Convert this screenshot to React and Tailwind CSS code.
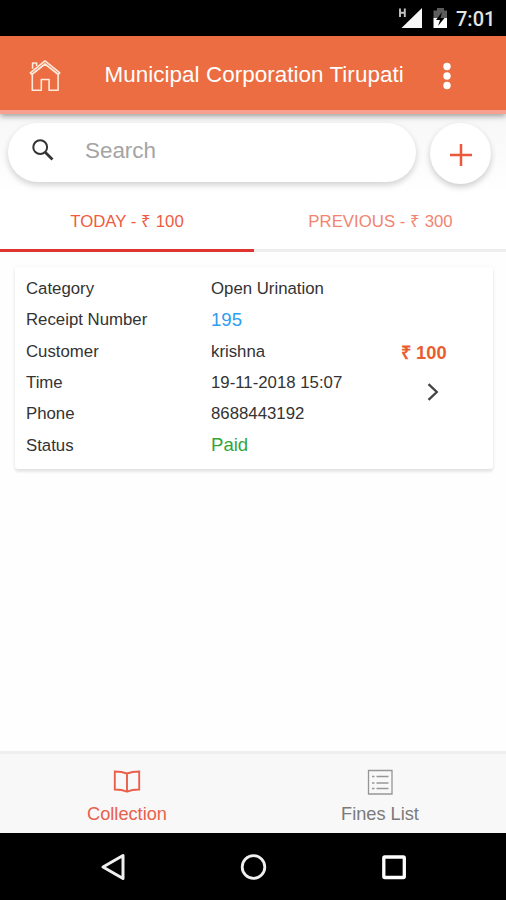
import React from 'react';

const details = [
  { label: 'Category', value: 'Open Urination', style: 'text-[#333333]' },
  { label: 'Receipt Number', value: '195', style: 'text-[18.6px] text-[#2f9df0]' },
  { label: 'Customer', value: 'krishna', style: 'text-[#333333]' },
  { label: 'Time', value: '19-11-2018 15:07', style: 'text-[#333333]' },
  { label: 'Phone', value: '8688443192', style: 'text-[#333333]' },
  { label: 'Status', value: 'Paid', style: 'text-[18.6px] text-[#33a63a]' },
];

function StatusBar() {
  return (
    <div className="flex h-9 shrink-0 items-center bg-black pl-[398px] text-[#e4e4e4]">
      <svg className="h-9 w-[56px] shrink-0" viewBox="0 0 56 36" fill="none">
        <path d="M2 8.500v8.500M6.800 8.500v8.500M2 12.700h4.800" stroke="#c4c4c4" strokeWidth="1.900" />
        <path d="M24 8v20H3.500z" fill="#f7f7f7" />
        <path d="M35.500 10.500h3.500V8h7v2.500h3V18H35.500z" fill="#5c5c5c" />
        <path d="M35.500 18H49v10H35.500z" fill="#fff" />
        <path d="M44 12l-6 8h4l-2 6 6.500-8h-4z" fill="#000" />
      </svg>
      <span className="ml-[2px] mt-[2px] font-[Roboto,sans-serif] text-[20px] font-medium leading-9">7:01</span>
    </div>
  );
}

function Header() {
  return (
    <header className="relative z-10 flex h-[78px] shrink-0 items-center border-b-[4px] border-[#f8a08f] bg-[#ec6d41] text-white shadow-[0_2px_6px_rgba(0,0,0,0.38)]">
      <svg className="ml-[29px] mt-[5px] h-[34px] w-[33px] shrink-0" viewBox="0 0 33 34" fill="none" stroke="#ffeadd" strokeWidth="1.6" strokeLinejoin="round">
        <path d="M1.300 13.800L16 1.800l14.800 12-1.500 1.700L16 5 2.800 15.500z" />
        <path d="M3.600 9.800V4h4v3M3.300 15.500v15.800h9V20.500h7.800v10.800h9V15.500" />
      </svg>
      <h1 className="ml-[42.500px] mt-[3px] w-[300px] whitespace-nowrap text-[22.400px] leading-8 tracking-[0.060px]">Municipal Corporation Tirupati</h1>
      <svg className="ml-[38px] mt-[5px] h-8 w-2 shrink-0" viewBox="0 0 8 32" fill="#fff">
        <circle cx="4" cy="6.500" r="3.700" />
        <circle cx="4" cy="16" r="3.700" />
        <circle cx="4" cy="25.500" r="3.700" />
      </svg>
    </header>
  );
}

function SearchRow() {
  return (
    <div className="flex h-[81px] shrink-0 items-start bg-gradient-to-b from-[#f7f7f7] to-white pl-2 pt-[9px]">
      <div className="flex h-[59px] w-[408px] items-center rounded-full bg-white pl-6 shadow-[0_3px_6px_rgba(0,0,0,0.18)]">
        <svg className="mb-[5px] h-[22px] w-[22px]" viewBox="0 0 22 22" fill="none" stroke="#333">
          <circle cx="8.200" cy="8.200" r="6.900" strokeWidth="2" />
          <path d="M13.200 13.200l7.300 7.300" strokeWidth="2.700" />
        </svg>
        <span className="mb-[3px] ml-[31px] text-[22.400px] leading-7 text-[#a4a4a4]">Search</span>
      </div>
      <div className="ml-[14px] flex h-[61px] w-[61px] items-center justify-center rounded-full bg-white shadow-[0_3px_6px_rgba(0,0,0,0.2)]">
        <svg className="mt-[2px] h-[22px] w-[22px]" viewBox="0 0 22 22" stroke="#e95a3c" strokeWidth="2.500">
          <path d="M11 0v22M0 11h22" />
        </svg>
      </div>
    </div>
  );
}

function Tabs() {
  return (
    <div className="flex h-[57px] shrink-0 text-[16.800px]">
      <div className="flex h-full w-[254px] items-center justify-center border-b-[3px] border-[#df3430] pb-[1px] text-[#ef5b40]">
        TODAY - ₹ 100
      </div>
      <div className="flex h-full flex-1 items-center justify-center border-b-[3px] border-[#eeeeee] pb-[1px] pl-[1px] text-[#f28470]">
        PREVIOUS - ₹ 300
      </div>
    </div>
  );
}

function ReceiptCard() {
  return (
    <div className="ml-[15px] mt-[15px] flex h-[202px] w-[478px] shrink-0 rounded-[3px] bg-white pl-[11px] pt-[6px] shadow-[0_3px_3px_rgba(0,0,0,0.09),0_0_4px_rgba(0,0,0,0.05)]">
      <div className="flex w-[364px] flex-col text-[16.800px] text-[#333333]">
        {details.map((d) => (
          <div key={d.label} className="flex h-[31.300px] items-center whitespace-nowrap">
            <span className="w-[185px]">{d.label}</span>
            <span className={d.style}>{d.value}</span>
          </div>
        ))}
      </div>
      <div className="ml-[11px] flex flex-col pt-[68px]">
        <span className="text-[18.300px] font-bold leading-6 text-[#e95e2e]">₹ 100</span>
        <svg className="ml-[26px] mt-[18px] h-[18px] w-3" viewBox="0 0 12 18" fill="none" stroke="#444" strokeWidth="2.300">
          <path d="M1.500 1.200L9.800 9l-8.300 7.800" />
        </svg>
      </div>
    </div>
  );
}

function BottomTabs() {
  return (
    <nav className="flex h-[82px] shrink-0 border-t-[3px] border-[#efefef] bg-[#f8f8f8] text-[18.200px]">
      <div className="flex w-[254px] flex-col items-center pt-[14px] text-[#e9604b]">
        <svg className="h-7 w-7" viewBox="0 0 28 28" fill="none" stroke="currentColor" strokeWidth="1.900">
          <path d="M1.800 3.500Q9 3.500 14 5.500Q19 3.500 26.200 3.500V21.500Q19 21.500 14 23.700Q9 21.500 1.800 21.500zM14 5.500v18" />
        </svg>
        <span className="mt-[6px] leading-6">Collection</span>
      </div>
      <div className="flex flex-1 flex-col items-center pt-[14px] text-[#7b7b7b]">
        <svg className="h-7 w-7" viewBox="0 0 28 28" fill="none" stroke="#969696">
          <path d="M2.500 2.500h23.500v23.500h-23.500z" strokeWidth="1.300" />
          <path d="M6 8.500h2.500M10.500 8.500H22.500M6 15h2.500M10.500 15H22.500M6 20.500h2.500M10.500 20.500H22.500" strokeWidth="1.500" />
        </svg>
        <span className="mt-[6px] leading-6">Fines List</span>
      </div>
    </nav>
  );
}

function SystemNav() {
  return (
    <div className="flex h-[67px] shrink-0 items-center bg-black pl-[99px]">
      <svg className="h-8 w-8" viewBox="0 0 32 32" fill="none" stroke="#f0f0f0" strokeWidth="3">
        <path d="M24 4.500v23L4 16z" strokeLinejoin="round" />
      </svg>
      <svg className="ml-[106px] h-8 w-8" viewBox="0 0 32 32" fill="none" stroke="#f0f0f0" strokeWidth="2.800">
        <circle cx="16.500" cy="16" r="11.300" />
      </svg>
      <svg className="ml-[109px] h-8 w-8" viewBox="0 0 32 32" fill="none" stroke="#fff" strokeWidth="3.300">
        <rect x="5.800" y="6" width="20.500" height="20.500" rx="1" />
      </svg>
    </div>
  );
}

export default function App() {
  return (
    <div className="flex h-[900px] w-[506px] flex-col overflow-hidden bg-white font-['Liberation_Sans',Arial,sans-serif]">
      <StatusBar />
      <Header />
      <SearchRow />
      <Tabs />
      <main className="flex flex-1 flex-col bg-[#fefefe]">
        <ReceiptCard />
      </main>
      <BottomTabs />
      <SystemNav />
    </div>
  );
}
